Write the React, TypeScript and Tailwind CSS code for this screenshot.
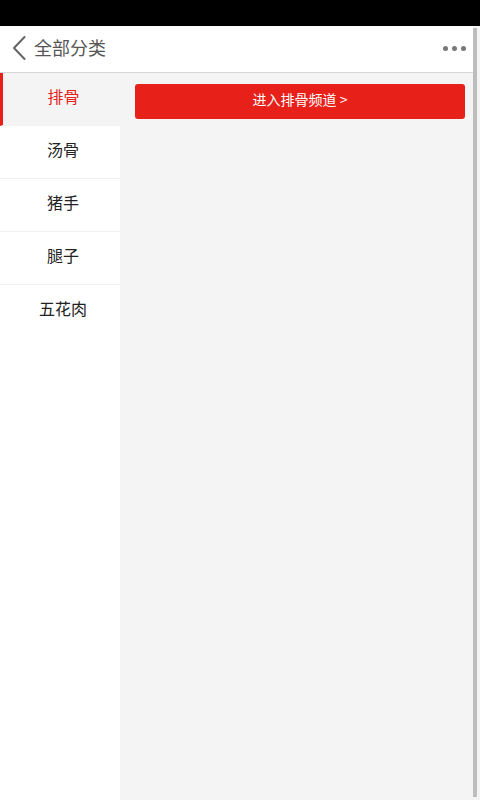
const CATEGORIES = ["排骨", "汤骨", "猪手", "腿子", "五花肉"];

export default function App() {
  const active = 0;

  return (
    <div
      className="flex h-[800px] w-[480px] flex-col overflow-hidden bg-white"
      style={{ fontFamily: '"Noto Sans CJK SC", "Noto Sans", sans-serif' }}
    >
      {/* Status bar */}
      <div className="h-[26px] shrink-0 bg-black" />

      <div className="flex min-h-0 flex-1">
        <div className="flex min-w-0 flex-1 flex-col">
          {/* Header */}
          <header className="flex h-[47px] shrink-0 items-center border-b border-[#d6d6d6] bg-white">
            <svg
              className="ml-[12px] mb-[2px] h-[24px] w-[14px]"
              fill="none"
              viewBox="0 0 14 24"
            >
              <polyline
                points="12.5,1 2,12 12.5,23"
                stroke="#666"
                strokeLinecap="round"
                strokeLinejoin="round"
                strokeWidth="2"
              />
            </svg>
            <span className="ml-[8px] pb-[4px] text-[18px] text-[#555]">
              全部分类
            </span>
            <div className="ml-auto mr-[7px] mb-[2px] flex items-center gap-[4px]">
              <span className="h-[5px] w-[5px] rounded-full bg-[#777]" />
              <span className="h-[5px] w-[5px] rounded-full bg-[#777]" />
              <span className="h-[5px] w-[5px] rounded-full bg-[#777]" />
            </div>
          </header>

          {/* Body */}
          <div className="flex min-h-0 flex-1">
            {/* Sidebar */}
            <nav className="w-[120px] shrink-0 bg-white">
              {CATEGORIES.map((name, i) => (
                <div
                  className={
                    i === active
                      ? "flex h-[53px] items-center justify-center border-b border-l-[3px] border-[#f4f4f4] border-l-[#e8201a] bg-[#f4f4f4] pl-[4px] pb-[7px] text-[16px] text-[#e8201a]"
                      : i === CATEGORIES.length - 1
                        ? "flex h-[53px] items-center justify-center pl-[6px] pb-[7px] text-[16px] text-[#222]"
                        : "flex h-[53px] items-center justify-center border-b border-[#f0f0f0] pl-[6px] pb-[7px] text-[16px] text-[#222]"
                  }
                  key={name}
                >
                  {name}
                </div>
              ))}
            </nav>

            {/* Content */}
            <main className="flex-1 bg-[#f4f4f4] px-[15px] pt-[11px] pr-[8px]">
              <button
                className="flex h-[35px] w-full items-center justify-center rounded-[3px] bg-[#e8201a] pb-[4px] text-[14px] text-white"
                type="button"
              >
                进入排骨频道 &gt;
              </button>
            </main>
          </div>
        </div>

        {/* Scrollbar */}
        <div className="flex w-[7px] shrink-0 flex-col bg-[#f4f4f4]">
          <div className="mt-[2px] mb-[3px] w-[4px] flex-1 bg-[#bdbdbd]" />
        </div>
      </div>
    </div>
  );
}
